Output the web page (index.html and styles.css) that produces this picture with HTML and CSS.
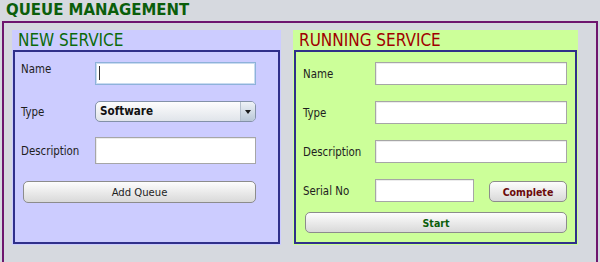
FILE: index.html
```html
<!DOCTYPE html>
<html lang="en">
<head>
  <meta charset="UTF-8">
  <title>Queue Management</title>
  <link rel="stylesheet" href="styles.css">
</head>
<body>
  <h1 class="page-title">QUEUE MANAGEMENT</h1>
  <div class="frame">
    <div class="panels">

      <section class="panel panel-new">
        <h2 class="panel-title">NEW SERVICE</h2>
        <div class="panel-body">
          <div class="form-row">
            <label class="label label-top">Name</label>
            <div class="field-wrap focused">
              <input type="text" class="field field-focus">
            </div>
          </div>
          <div class="form-row row-type">
            <label class="label">Type</label>
            <div class="select">
              <span class="select-value">Software</span>
              <span class="select-arrow"></span>
            </div>
          </div>
          <div class="form-row row-desc">
            <label class="label">Description</label>
            <input type="text" class="field field-tall">
          </div>
          <button class="btn btn-add">Add Queue</button>
        </div>
      </section>

      <section class="panel panel-run">
        <h2 class="panel-title">RUNNING SERVICE</h2>
        <div class="panel-body">
          <div class="form-row">
            <label class="label">Name</label>
            <input type="text" class="field">
          </div>
          <div class="form-row spaced">
            <label class="label">Type</label>
            <input type="text" class="field">
          </div>
          <div class="form-row spaced">
            <label class="label">Description</label>
            <input type="text" class="field">
          </div>
          <div class="form-row spaced serial-row">
            <label class="label">Serial No</label>
            <input type="text" class="field field-serial">
            <button class="btn btn-complete">Complete</button>
          </div>
          <button class="btn btn-start">Start</button>
        </div>
      </section>

    </div>
  </div>
</body>
</html>
```

FILE: styles.css
```css
* {
  box-sizing: border-box;
}

body {
  margin: 0;
  background-color: #d6d9df;
  font-family: 'DejaVu Sans Condensed', 'DejaVu Sans', sans-serif;
  font-stretch: condensed;
  color: #1e1e1e;
}

.page-title {
  margin: 0;
  height: 21px;
  line-height: 20px;
  padding-left: 6px;
  font-size: 16.6px;
  font-weight: bold;
  color: #0b5e0b;
}

.frame {
  margin: 0 2px;
  height: 250px;
  border: 2px solid #6e166e;
  border-bottom: none;
  padding: 7px 18px 0 8px;
}

.panels {
  display: flex;
  gap: 12px;
}

.panel {
  padding: 0 1px 1px;
}

.panel-new {
  width: 269px;
  background-color: #ccccff;
}

.panel-run {
  width: 285px;
  background-color: #ccff99;
}

.panel-title {
  margin: 0;
  height: 20px;
  line-height: 21px;
  padding-left: 5px;
  font-size: 17px;
  font-weight: normal;
}

.panel-new .panel-title {
  color: #0b6a0b;
}

.panel-run .panel-title {
  color: #a00000;
}

.panel-body {
  height: 194px;
  border: 2px solid #30308a;
  padding-top: 10px;
  display: flex;
  flex-direction: column;
  align-items: flex-start;
}

.panel-new .panel-body {
  padding-left: 6px;
}

.panel-run .panel-body {
  padding-left: 7px;
}

.form-row {
  display: flex;
  align-items: center;
}

.label {
  font-size: 11.4px;
  line-height: 14px;
}

.panel-new .label {
  width: 74px;
}

.panel-run .label {
  width: 72px;
}

.label-top {
  align-self: flex-start;
}

.field {
  height: 23px;
  margin: 0;
  padding: 0 4px;
  border: 1px solid #a6a6a6;
  background-color: #ffffff;
  box-shadow: inset 1px 1px 0 #ececec;
  font-family: inherit;
  font-size: 11px;
  outline: none;
}

.panel-new .field {
  width: 161px;
}

.panel-run .field {
  width: 192px;
}

.field-wrap {
  position: relative;
}

.field-focus {
  border-color: #8eb2da;
  box-shadow: inset 0 0 0 1px #c9dbf0;
}

/* text caret of the focused field */
.focused::after {
  content: "";
  position: absolute;
  left: 4px;
  top: 4px;
  width: 1px;
  height: 14px;
  background-color: #333333;
}

.row-type {
  margin-top: 16px;
}

.select {
  width: 161px;
  height: 21px;
  display: flex;
  border: 1px solid #8391a8;
  border-radius: 5px;
  background: linear-gradient(#fdfdfd, #e0e4ea);
  overflow: hidden;
}

.select-value {
  flex: 1;
  padding-left: 4px;
  font-size: 11.6px;
  font-weight: bold;
  line-height: 19px;
  color: #111111;
}

.select-arrow {
  width: 15px;
  border-left: 1px solid #b4bfcd;
  background: linear-gradient(#eef2f7, #b9c7d7);
  display: flex;
  align-items: center;
  justify-content: center;
}

.select-arrow::before {
  content: "";
  border-left: 3px solid transparent;
  border-right: 3px solid transparent;
  border-top: 4px solid #1c1c1c;
}

.row-desc {
  margin-top: 15px;
}

.field-tall {
  height: 27px;
}

.btn {
  margin: 0;
  padding: 0;
  height: 22px;
  border: 1px solid #8c8c8c;
  border-radius: 5px;
  background: linear-gradient(#fdfdfd, #e9e9e9 55%, #d9d9d9);
  font-family: inherit;
  font-stretch: condensed;
  font-size: 11.2px;
  color: #1e1e1e;
  cursor: pointer;
}

.btn-add {
  width: 233px;
  margin: 17px 0 0 2px;
}

.spaced {
  margin-top: 16px;
}

.panel-run .field-serial {
  width: 99px;
}

.btn-complete {
  align-self: flex-start;
  width: 78px;
  height: 21px;
  margin: 2px 0 0 15px;
  font-size: 10.5px;
  font-weight: bold;
  color: #6a0a0a;
}

.btn-start {
  width: 262px;
  height: 21px;
  margin: 10px 0 0 2px;
  font-size: 10.5px;
  font-weight: bold;
  color: #0b5e0b;
}
```
